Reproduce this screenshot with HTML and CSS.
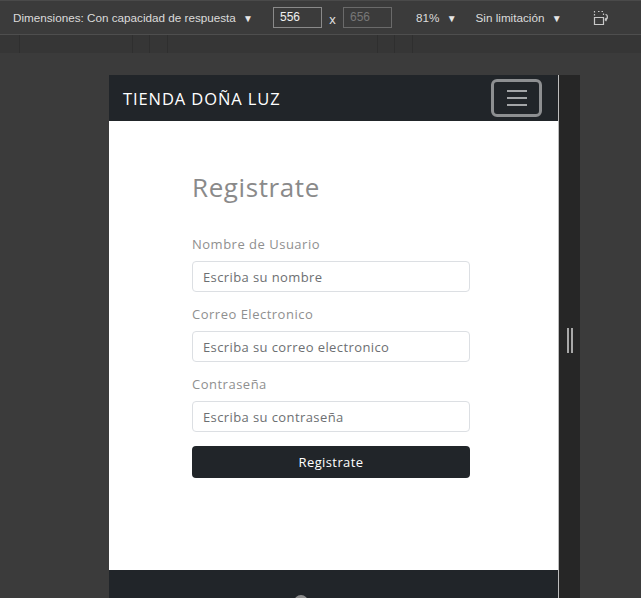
FILE: index.html
```html
<!DOCTYPE html>
<html lang="es">
<head>
<meta charset="utf-8">
<title>Tienda Doña Luz</title>
<link rel="stylesheet" href="styles.css">
</head>
<body>
<div class="toolbar">
  <span class="tb-item">Dimensiones: Con capacidad de respuesta <span class="tri">▼</span></span>
  <span class="tb-box">556</span>
  <span class="tb-x">x</span>
  <span class="tb-box dim">656</span>
  <span class="tb-item zoom">81% <span class="tri">▼</span></span>
  <span class="tb-item sin">Sin limitación <span class="tri">▼</span></span>
  <svg class="rotate" width="18" height="16" viewBox="0 0 18 16" fill="none" stroke="#c8c8c8" stroke-width="1.2">
    <path d="M2.5 7.5 V14.5 H11.5 V7.5 Z"/>
    <path d="M2.5 5.5 V3.5 M2.5 2.5 V1.5 H4.5 M6 1.5 H8 M9.5 1.5 H11.5 V2.5 M11.5 3.5 V5.5" stroke-dasharray="1.5 1.5"/>
    <path d="M13.5 4.5 C16 4.5 16 9.5 13.5 9.5 M13 9.5 L14.5 8 M13 9.5 L14.5 11"/>
  </svg>
</div>
<div class="rulers">
  <span class="r-seg s1"></span><span class="r-seg s2"></span><span class="r-seg s3"></span><span class="r-seg s4"></span><span class="r-seg s5"></span><span class="r-seg s6"></span><span class="r-seg s7"></span>
</div>
<div class="stage">
  <div class="device">
    <div class="screen">
      <nav class="navbar">
        <span class="brand">TIENDA DOÑA LUZ</span>
        <button class="toggler" type="button"><span class="bars"><i></i><i></i><i></i></span></button>
      </nav>
      <main class="content">
        <form class="form">
          <h2 class="title">Registrate</h2>
          <div class="group">
            <label class="label">Nombre de Usuario</label>
            <input class="input" type="text" placeholder="Escriba su nombre">
          </div>
          <div class="group">
            <label class="label">Correo Electronico</label>
            <input class="input" type="email" placeholder="Escriba su correo electronico">
          </div>
          <div class="group">
            <label class="label">Contraseña</label>
            <input class="input" type="password" placeholder="Escriba su contraseña">
          </div>
          <button class="btn" type="button">Registrate</button>
        </form>
      </main>
      <footer class="footer">
        <svg class="foot-icon" width="16" height="16" viewBox="0 0 16 16"><circle cx="8" cy="8" r="7" fill="#8c8c8c"/></svg>
      </footer>
    </div>
    <div class="handle-strip"><span class="handle"></span></div>
  </div>
</div>
</body>
</html>
```
FILE: styles.css
```css
* { box-sizing: border-box; }
html, body { margin: 0; padding: 0; }
body {
  background: #3b3b3b;
  font-family: "Liberation Sans", Arial, sans-serif;
  overflow: hidden;
  height: 598px;
}
.toolbar {
  height: 35px;
  display: flex;
  align-items: center;
  padding-left: 13px;
  background: #3b3b3b;
  border-top: 1px solid #4a4a4a;
  border-bottom: 1px solid #4e4e4e;
  color: #dcdcdc;
  font-size: 11.7px;
}
.tb-item { white-space: nowrap; }
.tri { font-size: 10px; margin-left: 4px; color: #e6e6e6; }
.tb-box {
  width: 49px;
  height: 21px;
  border: 1px solid #8a8a8a;
  margin-left: 20px;
  padding-left: 6px;
  line-height: 19px;
  color: #f0f0f0;
  font-size: 12px;
}
.tb-box.dim { margin-left: 0; border-color: #6a6a6a; color: #777; }
.tb-x { width: 21px; text-align: center; margin-top: 4px; color: #e0e0e0; font-size: 13px; }
.zoom { margin-left: 24px; }
.sin { margin-left: 19px; }
.rotate { margin-left: 30px; }
.rulers {
  height: 18px;
  background: #363636;
  display: flex;
}
.r-seg { height: 18px; border-right: 1px solid #2f2f2f; }
.s1 { width: 20px; } .s2 { width: 113px; } .s3 { width: 17px; } .s4 { width: 18px; }
.s5 { width: 210px; } .s6 { width: 17px; } .s7 { width: 18px; }
.stage { padding: 22px 0 0 109px; }
.device { display: flex; width: 471px; }
.screen {
  width: 450px;
  background: #fff;
  font-family: "Open Sans", "Liberation Sans", sans-serif;
  border-right: 1px solid #bdbdbd;
}
.handle-strip {
  width: 21px;
  background: #262626;
  position: relative;
}
.handle {
  position: absolute;
  left: 8px;
  top: 253px;
  width: 6px;
  height: 25px;
  border-left: 2px solid #a8a8a8;
  border-right: 2px solid #a8a8a8;
}
.navbar {
  height: 46px;
  background: #212529;
  display: flex;
  align-items: center;
  justify-content: space-between;
  padding: 0 16px 0 14px;
}
.brand { color: #fff; font-size: 16.5px; letter-spacing: 0.9px; }
.toggler {
  width: 51px;
  height: 38px;
  background: transparent;
  border: 3px solid #8d8f91;
  border-radius: 6px;
  display: flex;
  align-items: center;
  justify-content: center;
  padding: 0;
}
.bars { display: flex; flex-direction: column; gap: 5px; width: 20px; }
.bars i { display: block; height: 2px; background: #a3a5a7; }
.content { height: 449px; padding: 51px 88px 0 83px; }
.form { display: flex; flex-direction: column; }
.title {
  margin: 0 0 32px;
  font-weight: 400;
  font-size: 26px;
  line-height: 31px;
  letter-spacing: 0.6px;
  color: #8a8a8a;
}
.group { display: flex; flex-direction: column; margin-bottom: 13px; }
.label {
  font-size: 13px;
  line-height: 19.5px;
  letter-spacing: 0.5px;
  color: #8f8f8f;
  margin-bottom: 6.5px;
}
.input {
  height: 31px;
  border: 1px solid #dcdfe3;
  border-radius: 4px;
  padding: 0 10px;
  font-family: inherit;
  font-size: 13px;
  letter-spacing: 0.4px;
}
.input::placeholder { color: #6d6f72; }
.btn {
  margin-top: 1px;
  height: 32px;
  background: #212529;
  color: #fff;
  border: none;
  border-radius: 4px;
  font-family: inherit;
  font-size: 13px;
  letter-spacing: 0.4px;
}
.footer { height: 120px; background: #212529; display: flex; justify-content: center; padding: 24px 0 0 0; }
.foot-icon { margin-left: -66px; }
```
